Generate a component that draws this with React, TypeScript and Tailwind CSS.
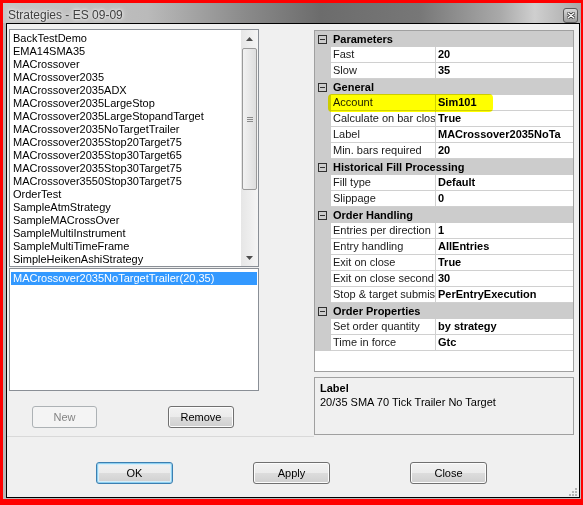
import React from 'react'

const strategies = [
  'BackTestDemo',
  'EMA14SMA35',
  'MACrossover',
  'MACrossover2035',
  'MACrossover2035ADX',
  'MACrossover2035LargeStop',
  'MACrossover2035LargeStopandTarget',
  'MACrossover2035NoTargetTrailer',
  'MACrossover2035Stop20Target75',
  'MACrossover2035Stop30Target65',
  'MACrossover2035Stop30Target75',
  'MACrossover3550Stop30Target75',
  'OrderTest',
  'SampleAtmStrategy',
  'SampleMACrossOver',
  'SampleMultiInstrument',
  'SampleMultiTimeFrame',
  'SimpleHeikenAshiStrategy',
]

type Row = { cat: string } | { name: string; value: string }

// names/values as they show in the grid columns
const rows: Row[] = [
  { cat: 'Parameters' },
  { name: 'Fast', value: '20' },
  { name: 'Slow', value: '35' },
  { cat: 'General' },
  { name: 'Account', value: 'Sim101' },
  { name: 'Calculate on bar clos', value: 'True' },
  { name: 'Label', value: 'MACrossover2035NoTa' },
  { name: 'Min. bars required', value: '20' },
  { cat: 'Historical Fill Processing' },
  { name: 'Fill type', value: 'Default' },
  { name: 'Slippage', value: '0' },
  { cat: 'Order Handling' },
  { name: 'Entries per direction', value: '1' },
  { name: 'Entry handling', value: 'AllEntries' },
  { name: 'Exit on close', value: 'True' },
  { name: 'Exit on close second', value: '30' },
  { name: 'Stop & target submis', value: 'PerEntryExecution' },
  { cat: 'Order Properties' },
  { name: 'Set order quantity', value: 'by strategy' },
  { name: 'Time in force', value: 'Gtc' },
]

function Button({ label, w, kind = 'normal' }: { label: string; w: string; kind?: 'normal' | 'default' | 'disabled' }) {
  const base = 'h-[22px] rounded-[3px] border flex items-center justify-center text-[11px] shrink-0 ' + w
  if (kind === 'disabled')
    return <div className={base + ' border-[#adb2b5] bg-[#f4f4f4] text-[#838383]'}>{label}</div>
  if (kind === 'default')
    return (
      <div className={base + ' border-[#3c7fb1] text-black bg-[linear-gradient(#f2f2f2_0%,#ebebeb_50%,#dddddd_50%,#cfcfcf_100%)] shadow-[inset_0_0_0_1px_#8fd0f0,inset_0_0_0_2px_#d6eefa]'}>
        {label}
      </div>
    )
  return (
    <div className={base + ' border-[#707070] text-black bg-[linear-gradient(#f2f2f2_0%,#ebebeb_50%,#dddddd_50%,#cfcfcf_100%)] shadow-[inset_0_0_0_1px_#fcfcfc]'}>
      {label}
    </div>
  )
}

function Arrow({ up }: { up?: boolean }) {
  return (
    <svg width="7" height="4" viewBox="0 0 7 4">
      <path d={up ? 'M0 4 L3.5 0 L7 4 Z' : 'M0 0 L3.5 4 L7 0 Z'} fill="#4d4d4d" />
    </svg>
  )
}

export default function App() {
  return (
    <div className="w-[583px] h-[505px] bg-[#ff0000] pt-[3px] pl-[3px] pr-[2px] pb-[6px] font-['Liberation_Sans',Arial,sans-serif] text-[11px] text-black">
      <div className="h-full flex flex-col bg-[#b8b8b8]">
        {/* title bar */}
        <div className="h-[20px] shrink-0 flex items-center justify-between pl-[5px] pr-[3px] bg-[linear-gradient(to_right,#c6c6c6_0%,#bababa_25%,#8a8a8a_42%,#6c6c6c_55%,#777777_72%,#a9a9a9_86%,#cfcfcf_92%,#a8a8a8_100%)]">
          <span className="mt-[3px] text-[12px] text-[#404040] [text-shadow:0_0_6px_#ffffff,0_0_3px_#ffffff]">Strategies - ES 09-09</span>
          <div className="w-[15px] h-[15px] mt-[4px] rounded-[3px] border border-[#5a5a5a] bg-[linear-gradient(#d8d8d8,#9c9c9c)] flex items-center justify-center">
            <svg width="8" height="7" viewBox="0 0 8 7">
              <path d="M1 1 L7 6 M7 1 L1 6" stroke="#3a3a3a" strokeWidth="3" strokeLinecap="round" />
              <path d="M1 1 L7 6 M7 1 L1 6" stroke="#ffffff" strokeWidth="1.4" strokeLinecap="round" />
            </svg>
          </div>
        </div>

        {/* client area */}
        <div className="relative flex-1 ml-[3px] mr-[1px] mb-[1px] border border-black bg-[#f0f0f0] flex flex-col">
          <div className="flex items-start">
            {/* left panel */}
            <div className="w-[307px] h-[413px] shrink-0 border-b border-[#d9d9d9] pl-[2px] pt-[5px]">
              <div className="w-[250px]">
                <div className="h-[238px] border border-[#8a8f96] bg-white flex">
                  <div className="flex-1 pt-[2px] pl-[3px] overflow-hidden">
                    {strategies.map(s => (
                      <div key={s} className="h-[13px] leading-[13px] whitespace-nowrap">{s}</div>
                    ))}
                  </div>
                  <div className="w-[17px] flex flex-col bg-[linear-gradient(to_right,#e6e6e6,#f5f5f5)]">
                    <div className="h-[17px] flex items-center justify-center"><Arrow up /></div>
                    <div className="h-[142px] mt-[1px] mx-[1px] rounded-[2px] border border-[#9a9a9a] bg-[linear-gradient(to_right,#f2f2f2,#dedede)] flex items-center justify-center">
                      <div className="flex flex-col gap-[1px]">
                        <div className="w-[6px] h-[1px] bg-[#8a8a8a]" />
                        <div className="w-[6px] h-[1px] bg-[#8a8a8a]" />
                        <div className="w-[6px] h-[1px] bg-[#8a8a8a]" />
                      </div>
                    </div>
                    <div className="flex-1" />
                    <div className="h-[17px] flex items-center justify-center"><Arrow /></div>
                  </div>
                </div>
                <div className="h-[123px] mt-[1px] border border-[#8a8f96] bg-white pt-[3px] px-[1px]">
                  <div className="h-[13px] leading-[13px] bg-[#3399ff] text-white pl-[2px] whitespace-nowrap">
                    MACrossover2035NoTargetTrailer(20,35)
                  </div>
                </div>
                <div className="flex mt-[15px] pl-[23px] gap-[71px]">
                  <Button label="New" w="w-[65px]" kind="disabled" />
                  <Button label="Remove" w="w-[66px]" />
                </div>
              </div>
            </div>

            {/* right panel */}
            <div className="w-[260px] shrink-0 pt-[6px]">
              <div className="relative h-[342px] border border-[#a0a0a0] bg-white">
                {rows.map((r, i) =>
                  'cat' in r ? (
                    <div key={i} className="h-[16px] flex items-center bg-[#cccccc]">
                      <div className="ml-[3px] w-[9px] h-[9px] border border-[#303030] flex items-center justify-center">
                        <div className="w-[5px] h-[1px] bg-[#303030]" />
                      </div>
                      <span className="ml-[6px] font-bold whitespace-nowrap">{r.cat}</span>
                    </div>
                  ) : (
                    <div key={i} className="h-[16px] flex">
                      <div className="w-[16px] shrink-0 bg-[#cccccc]" />
                      <div className="w-[105px] shrink-0 border-b border-r border-[#d0d0d0] pl-[2px] leading-[15px] overflow-hidden whitespace-nowrap text-[#1a1a1a]">
                        {r.name}
                      </div>
                      <div className="flex-1 min-w-0 border-b border-[#d0d0d0] pl-[2px] leading-[15px] font-bold overflow-hidden whitespace-nowrap">
                        {r.value}
                      </div>
                    </div>
                  )
                )}
                {/* highlighter mark */}
                <div className="absolute left-[13px] top-[63px] w-[165px] h-[18px] rounded-[4px] bg-[#ffff00] mix-blend-multiply blur-[0.6px]" />
              </div>
              <div className="h-[58px] mt-[5px] border border-[#a0a0a0] bg-[#f0f0f0] pl-[5px] pt-[3px]">
                <div className="font-bold leading-[14px]">Label</div>
                <div className="leading-[14px]">20/35 SMA 70 Tick Trailer No Target</div>
              </div>
            </div>
          </div>

          {/* dialog buttons */}
          <div className="flex mt-[25px] pl-[89px] gap-[80px]">
            <Button label="OK" w="w-[77px]" kind="default" />
            <Button label="Apply" w="w-[77px]" />
            <Button label="Close" w="w-[77px]" />
          </div>

          {/* size grip */}
          <svg className="absolute right-[2px] bottom-[1px]" width="8" height="8" viewBox="0 0 8 8">
            {[[6, 0], [6, 3], [3, 3], [6, 6], [3, 6], [0, 6]].map(([x, y]) => (
              <rect key={`${x}-${y}`} x={x} y={y} width="2" height="2" fill="#b5b5b5" />
            ))}
          </svg>
        </div>
      </div>
    </div>
  )
}
